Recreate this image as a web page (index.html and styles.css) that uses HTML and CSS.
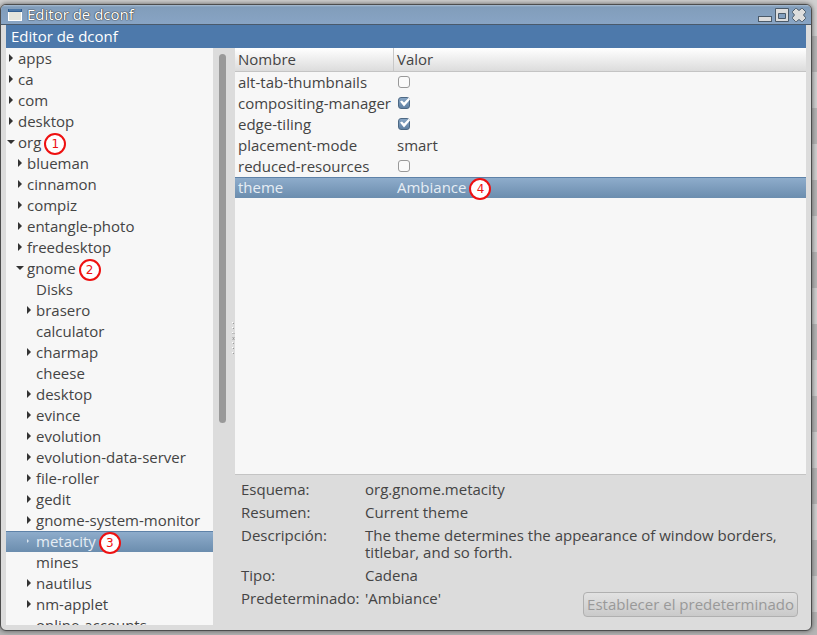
FILE: index.html
```
<!DOCTYPE html>
<html lang="es">
<head>
<meta charset="utf-8">
<title>Editor de dconf</title>
<link rel="stylesheet" href="styles.css">
</head>
<body>
<main class="window">
  <header class="titlebar">
    <svg class="app-icon" width="14" height="12" viewBox="0 0 14 12" aria-hidden="true"><rect x=".5" y=".5" width="13" height="11" fill="#e3e5dc" stroke="#fff"/><path d="M0 0h14v3H0z" fill="#315f91"/><path d="M1 1h12" stroke="#6691bd"/></svg>
    <h1 class="window-title">Editor de dconf</h1>
    <div class="controls">
      <button class="control" aria-label="Minimizar"><svg width="14" height="14" viewBox="0 0 14 14"><rect x=".5" y="8.500" width="13" height="5" fill="#ddd" stroke="#4b5a69"/></svg></button>
      <button class="control" aria-label="Maximizar"><svg width="14" height="14" viewBox="0 0 14 14"><path d="M.5.500h13v13H.500zM3.500 5.500v5h7v-5z" fill="#ddd" fill-rule="evenodd" stroke="#4b5a69"/></svg></button>
      <button class="control" aria-label="Cerrar"><svg width="14" height="14" viewBox="0 0 14 14"><path d="M3.500.500h1L7 2.500 9.500.500h1l3 3v1L11.500 7l2 2.500v1l-3 3h-1L7 11.500l-2.500 2h-1l-3-3v-1L2.500 7l-2-2.500v-1z" fill="#ddd" stroke="#4b5a69"/></svg></button>
    </div>
  </header>
  <nav class="menubar"><a class="menu" href="#">Editor de dconf</a></nav>
  <div class="content">
    <ul class="tree" role="tree">
      <li class="node closed" role="treeitem">apps</li>
      <li class="node closed" role="treeitem">ca</li>
      <li class="node closed" role="treeitem">com</li>
      <li class="node closed" role="treeitem">desktop</li>
      <li class="node open" role="treeitem">org<span class="badge">1</span></li>
      <li class="node closed level-1" role="treeitem">blueman</li>
      <li class="node closed level-1" role="treeitem">cinnamon</li>
      <li class="node closed level-1" role="treeitem">compiz</li>
      <li class="node closed level-1" role="treeitem">entangle-photo</li>
      <li class="node closed level-1" role="treeitem">freedesktop</li>
      <li class="node open level-1" role="treeitem">gnome<span class="badge">2</span></li>
      <li class="node level-2" role="treeitem">Disks</li>
      <li class="node closed level-2" role="treeitem">brasero</li>
      <li class="node level-2" role="treeitem">calculator</li>
      <li class="node closed level-2" role="treeitem">charmap</li>
      <li class="node level-2" role="treeitem">cheese</li>
      <li class="node closed level-2" role="treeitem">desktop</li>
      <li class="node closed level-2" role="treeitem">evince</li>
      <li class="node closed level-2" role="treeitem">evolution</li>
      <li class="node closed level-2" role="treeitem">evolution-data-server</li>
      <li class="node closed level-2" role="treeitem">file-roller</li>
      <li class="node closed level-2" role="treeitem">gedit</li>
      <li class="node closed level-2" role="treeitem">gnome-system-monitor</li>
      <li class="node closed level-2 selected" role="treeitem" aria-selected="true">metacity<span class="badge">3</span></li>
      <li class="node level-2" role="treeitem">mines</li>
      <li class="node closed level-2" role="treeitem">nautilus</li>
      <li class="node closed level-2" role="treeitem">nm-applet</li>
      <li class="node level-2" role="treeitem">online-accounts</li>
    </ul>
    <div class="gutter">
      <div class="thumb"></div>
      <svg class="grip" width="3" height="33" viewBox="0 0 3 33" aria-hidden="true"><path d="M.5 0v33" stroke="#fff" stroke-dasharray="1 4"/><path d="M1.500 1v32" stroke="#999" stroke-dasharray="1 4"/><path d="M0 11.500h3M0 15.500h3M0 17.500h3" stroke="#bbb"/></svg>
    </div>
    <section class="panel">
      <div class="keys">
        <table class="table">
          <thead><tr><th class="name">Nombre</th><th>Valor</th></tr></thead>
          <tbody>
            <tr><td><label for="k1">alt-tab-thumbnails</label></td><td><input class="check" id="k1" type="checkbox"></td></tr>
            <tr><td><label for="k2">compositing-manager</label></td><td><input class="check" id="k2" type="checkbox" checked></td></tr>
            <tr><td><label for="k3">edge-tiling</label></td><td><input class="check" id="k3" type="checkbox" checked></td></tr>
            <tr><td>placement-mode</td><td>smart</td></tr>
            <tr><td><label for="k5">reduced-resources</label></td><td><input class="check" id="k5" type="checkbox"></td></tr>
            <tr class="selected"><td>theme</td><td><span class="value">Ambiance<span class="badge">4</span></span></td></tr>
          </tbody>
        </table>
      </div>
      <div class="details">
        <dl class="facts">
          <dt>Esquema:</dt><dd>org.gnome.metacity</dd>
          <dt>Resumen:</dt><dd>Current theme</dd>
          <dt>Descripción:</dt><dd>The theme determines the appearance of window borders, titlebar, and so forth.</dd>
          <dt>Tipo:</dt><dd>Cadena</dd>
          <dt>Predeterminado:</dt><dd>'Ambiance'</dd>
        </dl>
        <button class="reset" disabled>Establecer el predeterminado</button>
      </div>
    </section>
  </div>
</main>
</body>
</html>
```
FILE: styles.css
```
* { box-sizing: border-box; }
body {
  margin: 0;
  height: 100vh;
  padding: 4px 5px 4px 0;
  background: repeating-linear-gradient(#d0d0d0 0 36px, #b4b4b4 36px 72px);
  font: 15px/21px "Open Sans", "Noto Sans", sans-serif;
  color: #444;
}
.window {
  height: 100%;
  display: flex;
  flex-direction: column;
  border: 1px solid #4d4d4d;
  border-radius: 6px;
  background: #dcdcdc;
  box-shadow: 0 0 5px #555;
  overflow: hidden;
}
.titlebar {
  flex: none;
  display: flex;
  align-items: center;
  height: 20px;
  padding: 0 5px 0 7px;
  border-bottom: 1px solid #4a5a6b;
  background: linear-gradient(#a9bdd2, #819dbb 2px, #88a4c4);
}
.window-title {
  margin: 0 0 0 5px;
  font-size: 15px;
  font-weight: 400;
  line-height: 19px;
  color: #fff;
  text-shadow: 0 0 1px #333, 0 0 1px #333, 0 0 1px #444;
}
.controls { display: flex; gap: 3px; margin-left: auto; }
.control { display: flex; padding: 0; border: 0; background: none; }
.menubar {
  flex: none;
  margin: 0 5px;
  padding: 0 5px;
  background: #4d79ab;
}
.menu { display: block; line-height: 23px; color: #fff; text-decoration: none; }
.content {
  flex: 1;
  min-height: 0;
  display: flex;
  margin: 0 5px 5px;
}
.tree {
  flex: 0 0 207px;
  margin: 0;
  padding: 0;
  overflow: hidden;
  list-style: none;
  background: #f7f7f7;
}
.node {
  position: relative;
  display: flex;
  height: 21px;
  padding-left: 12px;
}
.node::before {
  content: "";
  width: 8px;
  height: 8px;
  margin: 6px 2px 0 -10px;
}
.closed::before { background: #333; clip-path: polygon(1px 0, 5px 4px, 1px 8px); }
.open::before { background: #333; margin: 6px 3px 0 -11px; clip-path: polygon(0 2px, 8px 2px, 4px 6px); }
.level-1 { padding-left: 21px; }
.level-2 { padding-left: 30px; }
.selected {
  color: #e6edf4;
  background: linear-gradient(#5e82a8, #5e82a8 1px, #8eaccb 1px, #6b8dae);
}
.node.selected::before { background: #dce6f0; clip-path: polygon(1px 2px, 3px 4px, 1px 6px); }
.badge {
  display: flex;
  align-items: center;
  justify-content: center;
  flex: none;
  position: relative;
  z-index: 1;
  width: 22px;
  height: 22px;
  margin: 1px 0 0 3px;
  border: 2px solid #ee1111;
  border-radius: 50%;
  background: #fff;
  color: #ee1111;
  font: 12px/18px "DejaVu Sans", sans-serif;
}
.gutter { position: relative; flex: none; width: 22px; background: #dcdcdc; }
.thumb { width: 7px; height: 64%; margin: 6px; border-radius: 4px; background: #999; }
.grip { position: absolute; right: 0; top: 50%; margin-top: -15px; }
.panel { flex: 1; min-width: 0; display: flex; flex-direction: column; }
.keys { flex: 1; border-bottom: 1px solid #c4c4c4; background: #f7f7f7; }
.table { width: 100%; border-collapse: separate; border-spacing: 0; table-layout: fixed; }
.table th {
  height: 24px;
  padding: 0 3px;
  border-bottom: 1px solid #c4c4c4;
  background: linear-gradient(#fff, #dcdcdc);
  font-weight: 400;
  text-align: left;
}
.table .name { width: 159px; border-right: 1px solid #c8c8c8; }
.table td { height: 21px; padding: 0 3px; white-space: nowrap; }
.value { display: flex; height: 21px; }
.check {
  appearance: none;
  display: block;
  width: 12px;
  height: 12px;
  margin: 0 1px 2px;
  border: 1px solid #999;
  border-radius: 3px;
  background: #fafafa;
}
.check:checked {
  position: relative;
  border-color: #4c6884;
  background: linear-gradient(#87a5c4, #5f80a2);
}
.check:checked::after {
  content: "";
  position: absolute;
  left: 1px;
  top: 0;
  width: 10px;
  height: 9px;
  background: #fff;
  clip-path: polygon(0 4px, 2px 3px, 4px 5px, 9px 0, 10px 2px, 4px 9px);
}
.details {
  flex: none;
  position: relative;
  padding: 6px 8px 18px 6px;
}
.facts {
  display: grid;
  grid-template-columns: 118px 1fr;
  gap: 6px;
  margin: 0;
  line-height: 17px;
}
.facts dd { margin: 0; }
.reset {
  position: absolute;
  right: 8px;
  bottom: 8px;
  height: 25px;
  padding: 0 3px;
  border: 1px solid #b0b0b0;
  border-radius: 4px;
  background: linear-gradient(#e2e2e2, #cacaca);
  color: #999;
  font: inherit;
}
```
